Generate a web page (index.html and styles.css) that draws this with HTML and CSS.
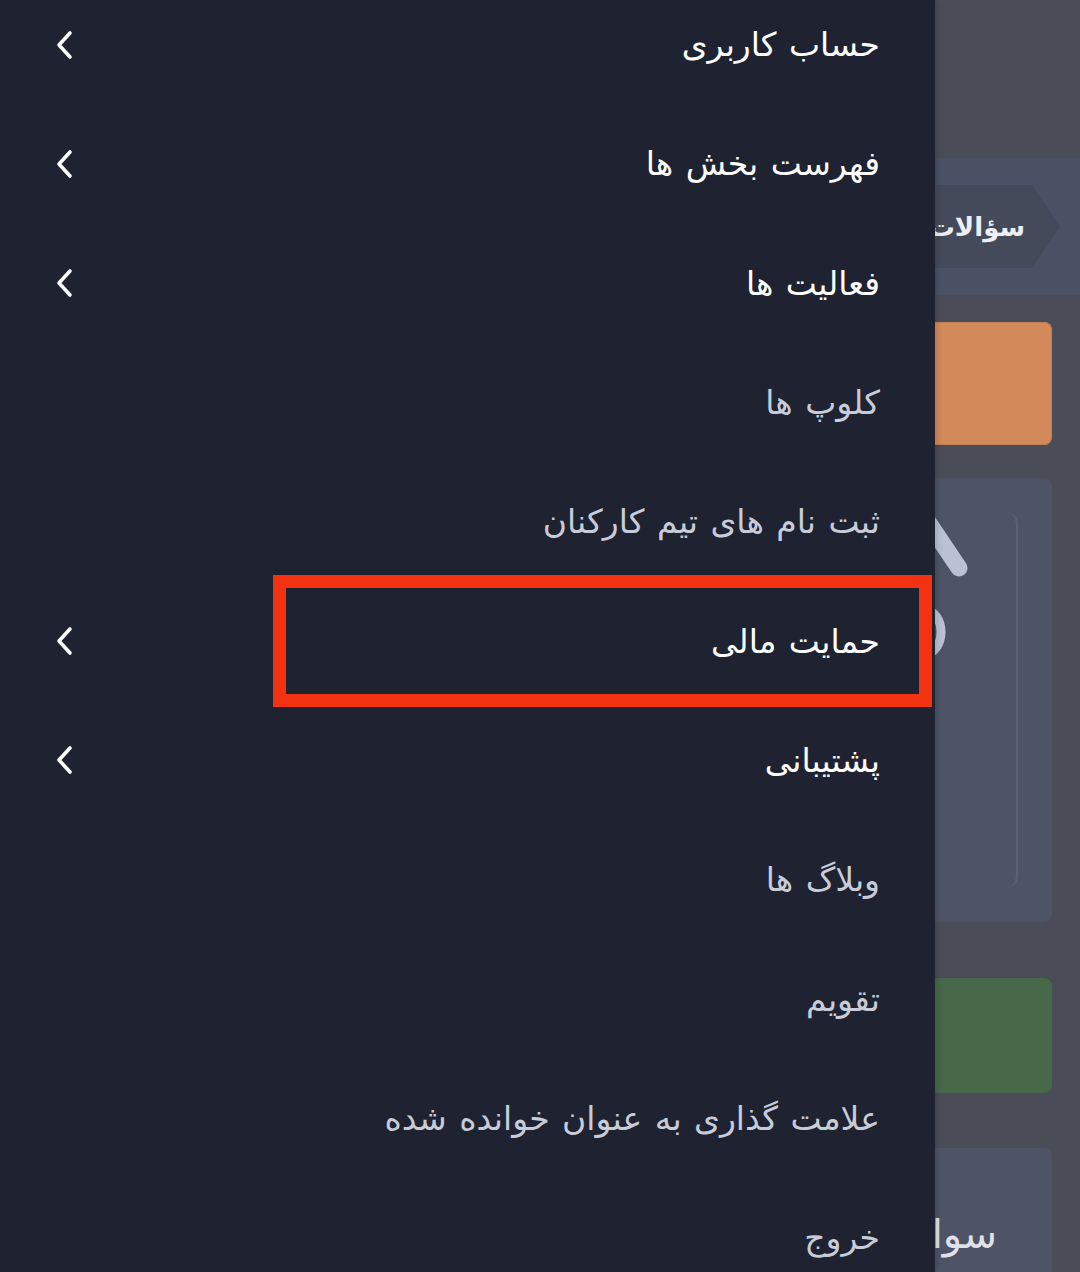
FILE: index.html
```html
<!DOCTYPE html>
<html lang="fa">
<head>
<meta charset="utf-8">
<title>Menu</title>
<link rel="stylesheet" href="styles.css">
</head>
<body>
<div class="page" dir="rtl">
  <div class="topbar"></div>
  <div class="crumbbar">
    <div class="tag">سؤالات متداول</div>
  </div>
  <div class="content">
    <div class="card card-orange"></div>
    <div class="card card-main">
      <div class="inner">
        <svg class="hero-icon" width="100" height="170" viewBox="0 0 100 170">
          <line x1="50" y1="-4" x2="89" y2="54" stroke="#b9c1d2" stroke-width="17" stroke-linecap="round"/>
          <ellipse cx="55" cy="118" rx="16" ry="22" fill="none" stroke="#b9c1d2" stroke-width="9"/>
        </svg>
      </div>
    </div>
    <div class="card card-green"></div>
    <div class="card card-last">
      <div class="last-title">سوال</div>
    </div>
  </div>
</div>

<nav class="drawer" dir="rtl">
  <ul class="menu">
    <li class="item strong"><span>حساب کاربری</span><svg class="chev" width="24" height="32" viewBox="0 0 24 32"><path d="M17 4 L6 16 L17 28" fill="none" stroke="#fff" stroke-width="3.6" stroke-linecap="round" stroke-linejoin="round"/></svg></li>
    <li class="item strong"><span>فهرست بخش ها</span><svg class="chev" width="24" height="32" viewBox="0 0 24 32"><path d="M17 4 L6 16 L17 28" fill="none" stroke="#fff" stroke-width="3.6" stroke-linecap="round" stroke-linejoin="round"/></svg></li>
    <li class="item strong"><span>فعالیت ها</span><svg class="chev" width="24" height="32" viewBox="0 0 24 32"><path d="M17 4 L6 16 L17 28" fill="none" stroke="#fff" stroke-width="3.6" stroke-linecap="round" stroke-linejoin="round"/></svg></li>
    <li class="item"><span>کلوپ ها</span></li>
    <li class="item"><span>ثبت نام های تیم کارکنان</span></li>
    <li class="item strong"><span>حمایت مالی</span><svg class="chev" width="24" height="32" viewBox="0 0 24 32"><path d="M17 4 L6 16 L17 28" fill="none" stroke="#fff" stroke-width="3.6" stroke-linecap="round" stroke-linejoin="round"/></svg></li>
    <li class="item strong"><span>پشتیبانی</span><svg class="chev" width="24" height="32" viewBox="0 0 24 32"><path d="M17 4 L6 16 L17 28" fill="none" stroke="#fff" stroke-width="3.6" stroke-linecap="round" stroke-linejoin="round"/></svg></li>
    <li class="item"><span>وبلاگ ها</span></li>
    <li class="item"><span>تقویم</span></li>
    <li class="item"><span>علامت گذاری به عنوان خوانده شده</span></li>
    <li class="item"><span>خروج</span></li>
  </ul>
</nav>

<div class="highlight"></div>
</body>
</html>
```

FILE: styles.css
```css
html, body {
  margin: 0;
  padding: 0;
}
body {
  width: 1080px;
  height: 1272px;
  overflow: hidden;
  position: relative;
  background: #4a4d58;
  font-family: "DejaVu Sans", "Noto Sans", sans-serif;
}

/* underlying page */
.page {
  display: flex;
  flex-direction: column;
  width: 1080px;
  height: 1272px;
  overflow: hidden;
  background: #4a4d58;
}
.topbar {
  height: 158px;
  flex: none;
}
.crumbbar {
  height: 137px;
  flex: none;
  background: #4b5164;
  display: flex;
  align-items: center;
  padding-right: 20px;
}
.tag {
  height: 83px;
  width: 420px;
  background: #454a5a;
  color: #eceef3;
  font-weight: bold;
  font-size: 26px;
  display: flex;
  align-items: center;
  padding-right: 35px;
  box-sizing: border-box;
  white-space: nowrap;
  overflow: hidden;
  clip-path: polygon(100% 50%, calc(100% - 28px) 0, 0 0, 0 100%, calc(100% - 28px) 100%);
  border-radius: 10px;
}
.content {
  display: flex;
  flex-direction: column;
  padding: 27px 28px 0 28px;
}
.card {
  border-radius: 8px;
  flex: none;
}
.card-orange {
  height: 123px;
  background: #d4895a;
  box-shadow: inset 0 0 0 1px #c47d52;
}
.card-main {
  margin-top: 33px;
  height: 444px;
  background: #4e5466;
  padding: 34px 34px;
  box-sizing: border-box;
  display: flex;
}
.inner {
  flex: 1;
  border-right: 2px solid #5a6075;
  border-radius: 12px;
  display: flex;
  justify-content: flex-start;
  padding-right: 46px;
}
.hero-icon {
  margin-top: 2px;
  display: block;
}
.card-green {
  margin-top: 56px;
  height: 115px;
  background: #48684a;
}
.card-last {
  margin-top: 55px;
  height: 200px;
  background: #4e5466;
  padding: 62px 55px 0 0;
  box-sizing: border-box;
}
.last-title {
  color: #dfe2ea;
  font-size: 40px;
  white-space: nowrap;
  line-height: 1.2;
}

/* drawer overlay */
.drawer {
  position: absolute;
  left: 0;
  top: 0;
  width: 935px;
  height: 1272px;
  background: #1f2331;
  overflow: hidden;
  box-shadow: 2px 0 6px rgba(0, 0, 0, 0.15);
}
.menu {
  list-style: none;
  margin: -15px 0 0 0;
  padding: 0;
}
.item {
  height: 119.3px;
  display: flex;
  align-items: center;
  justify-content: space-between;
  padding: 0 55px 0 53px;
  color: #c7ccd8;
  font-size: 33px;
  word-spacing: 2px;
}
.item.strong {
  color: #ffffff;
}
.chev {
  display: block;
}

/* annotation box */
.highlight {
  position: absolute;
  left: 273px;
  top: 575px;
  width: 659px;
  height: 132px;
  box-sizing: border-box;
  border: 13px solid #f33212;
}
```
